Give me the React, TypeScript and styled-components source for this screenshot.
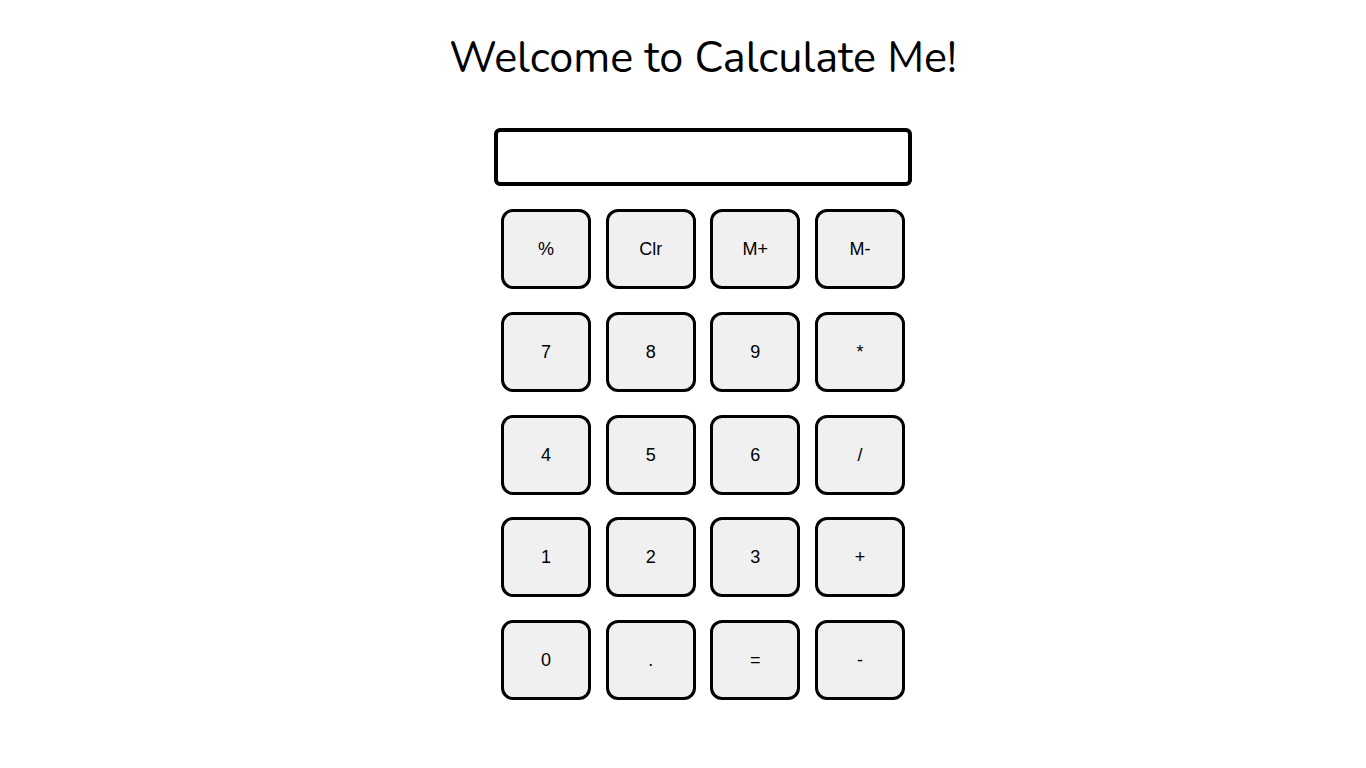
import React from "react";
import styled, { createGlobalStyle } from "styled-components";

const GlobalStyle = createGlobalStyle`
  html, body {
    background: #ffffff;
  }
  body {
    margin: 8px;
    font-family: "Liberation Sans", Arial, sans-serif;
    color: #000000;
  }
`;

const Page = styled.main`
  box-sizing: border-box;
  width: 100%;
  padding: 23px 0 68px 40px;
  display: flex;
  flex-direction: column;
  align-items: center;
`;

const Title = styled.h1`
  margin: 0;
  font-family: "Nunito", "Lato", "Open Sans", sans-serif;
  font-weight: 400;
  font-size: 43.2px;
  line-height: 54px;
  color: #000000;
  white-space: nowrap;
`;

const Display = styled.input`
  box-sizing: border-box;
  margin-top: 43px;
  width: 418px;
  height: 58px;
  border: 4px solid #000000;
  border-radius: 6px;
  background: #ffffff;
  padding: 0 10px;
  font-family: "Liberation Sans", Arial, sans-serif;
  font-size: 24px;
  outline: none;
`;

const Keypad = styled.div`
  margin-top: 23px;
  display: grid;
  grid-template-columns: repeat(4, 90px);
  grid-auto-rows: 80px;
  column-gap: 14.67px;
  row-gap: 22.75px;
`;

const Key = styled.button`
  box-sizing: border-box;
  width: 100%;
  height: 100%;
  margin: 0;
  padding: 0;
  border: 3px solid #000000;
  border-radius: 12px;
  background: #f0f0f0;
  color: #000000;
  font-family: "Liberation Sans", Arial, sans-serif;
  font-size: 18px;
  line-height: 1;
  cursor: pointer;
`;

const keys = [
  "%", "Clr", "M+", "M-",
  "7", "8", "9", "*",
  "4", "5", "6", "/",
  "1", "2", "3", "+",
  "0", ".", "=", "-",
];

export default function App() {
  return (
    <>
      <GlobalStyle />
      <Page>
        <Title>Welcome to Calculate Me!</Title>
        <Display type="text" readOnly value="" />
        <Keypad>
          {keys.map((k) => (
            <Key key={k} type="button">
              {k}
            </Key>
          ))}
        </Keypad>
      </Page>
    </>
  );
}
